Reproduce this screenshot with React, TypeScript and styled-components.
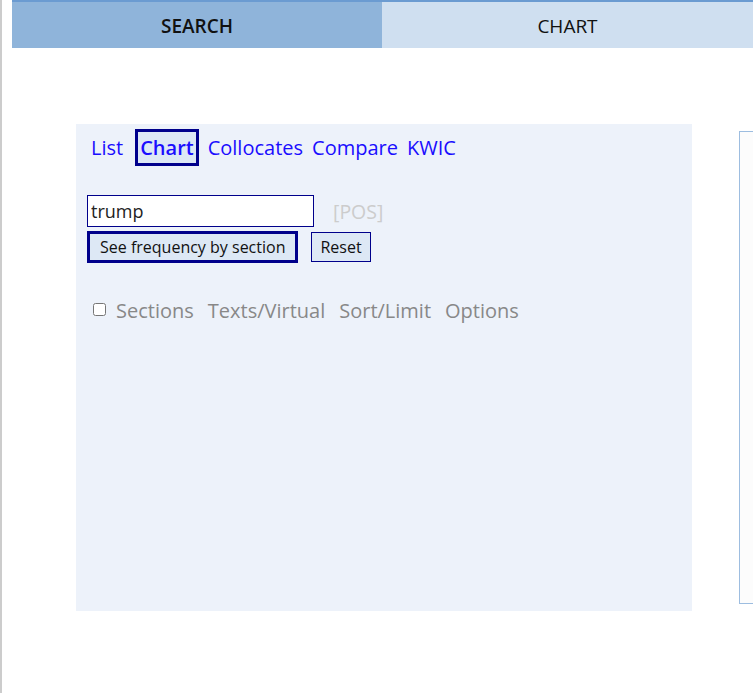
import React, { useState } from "react";
import styled, { createGlobalStyle } from "styled-components";

const GlobalStyle = createGlobalStyle`
  html, body {
    margin: 0;
    padding: 0;
    background: #fff;
    font-family: "Open Sans", "Noto Sans", sans-serif;
  }
`;

const Page = styled.div`
  height: 693px;
  border-left: 2px solid #cccccc;
  overflow: hidden;
  box-sizing: border-box;
`;

const TabBar = styled.div`
  display: flex;
  margin-left: 10px;
  border-top: 2px solid #6b9bd1;
`;

const Tab = styled.div<{ active?: boolean }>`
  height: 46px;
  flex: ${({ active }) => (active ? "0 0 370px" : "1 0 370px")};
  display: flex;
  align-items: center;
  justify-content: center;
  padding-top: 1px;
  box-sizing: border-box;
  font-size: 19px;
  color: #111;
  font-weight: ${({ active }) => (active ? 600 : 400)};
  background: ${({ active }) => (active ? "#8fb4da" : "#cfdff0")};
`;

const Main = styled.div`
  display: flex;
  align-items: flex-start;
  padding-top: 76px;
  padding-left: 74px;
`;

const Panel = styled.div`
  width: 616px;
  height: 487px;
  flex-shrink: 0;
  background: #edf2fa;
  padding: 5px 0 0 15px;
  box-sizing: border-box;
`;

const LinkRow = styled.div`
  display: flex;
  align-items: center;
  gap: 9px;
`;

const NavLink = styled.a<{ active?: boolean }>`
  font-size: 20px;
  color: #1a0dff;
  text-decoration: none;
  cursor: pointer;
  line-height: 27px;
  padding: ${({ active }) => (active ? "2px 2px" : "2px 0")};
  margin-left: ${({ active }) => (active ? "3px" : "0")};
  font-weight: ${({ active }) => (active ? 600 : 400)};
  border: 3px solid ${({ active }) => (active ? "#00008b" : "transparent")};
  border-width: ${({ active }) => (active ? "3px" : "3px 0")};
  background: ${({ active }) => (active ? "#dde8f5" : "transparent")};
`;

const Form = styled.div`
  margin-top: 29px;
  margin-left: -4px;
`;

const InputRow = styled.div`
  display: flex;
  align-items: center;
`;

const WordInput = styled.input`
  width: 227px;
  height: 32px;
  box-sizing: border-box;
  border: 1px solid #00008b;
  font-family: "Open Sans", "Noto Sans", sans-serif;
  font-size: 18px;
  color: #222;
  padding: 0 3px;
  outline: none;
`;

const PosHint = styled.span`
  margin-left: 19px;
  font-size: 19.5px;
  color: #cccccc;
`;

const ButtonRow = styled.div`
  display: flex;
  align-items: center;
  gap: 13px;
  margin-top: 4px;
`;

const Btn = styled.button<{ primary?: boolean }>`
  font-family: "Open Sans", "Noto Sans", sans-serif;
  font-size: 16px;
  color: #111;
  background: #dde8f5;
  border: ${({ primary }) => (primary ? "3px" : "1px")} solid #00008b;
  height: ${({ primary }) => (primary ? "32px" : "30px")};
  padding: ${({ primary }) => (primary ? "0 10px" : "0 8px")};
  box-sizing: border-box;
  cursor: pointer;
`;

const OptionsRow = styled.div`
  display: flex;
  align-items: center;
  margin-top: 34px;
  margin-left: 2px;
  font-size: 20px;
  color: #888;
`;

const Check = styled.input`
  width: 13px;
  height: 13px;
  margin: -3px 10px 0 0;
`;

const OptionItem = styled.span`
  margin-right: 14px;
`;

const SideBox = styled.div`
  margin-left: 47px;
  margin-top: 7px;
  width: 40px;
  height: 473px;
  flex-shrink: 0;
  border: 1px solid #9dbde0;
  border-right: none;
  background: #fcfcfc;
  box-sizing: border-box;
`;

export default function App() {
  const [word, setWord] = useState("trump");
  const links = ["List", "Chart", "Collocates", "Compare", "KWIC"];

  return (
    <>
      <GlobalStyle />
      <Page>
        <TabBar>
          <Tab active>SEARCH</Tab>
          <Tab>CHART</Tab>
        </TabBar>
        <Main>
          <Panel>
            <LinkRow>
              {links.map((l) => (
                <NavLink key={l} active={l === "Chart"}>
                  {l}
                </NavLink>
              ))}
            </LinkRow>
            <Form>
              <InputRow>
                <WordInput value={word} onChange={(e) => setWord(e.target.value)} />
                <PosHint>[POS]</PosHint>
              </InputRow>
              <ButtonRow>
                <Btn primary>See frequency by section</Btn>
                <Btn>Reset</Btn>
              </ButtonRow>
            </Form>
            <OptionsRow>
              <Check type="checkbox" />
              <OptionItem>Sections</OptionItem>
              <OptionItem>Texts/Virtual</OptionItem>
              <OptionItem>Sort/Limit</OptionItem>
              <OptionItem>Options</OptionItem>
            </OptionsRow>
          </Panel>
          <SideBox />
        </Main>
      </Page>
    </>
  );
}
